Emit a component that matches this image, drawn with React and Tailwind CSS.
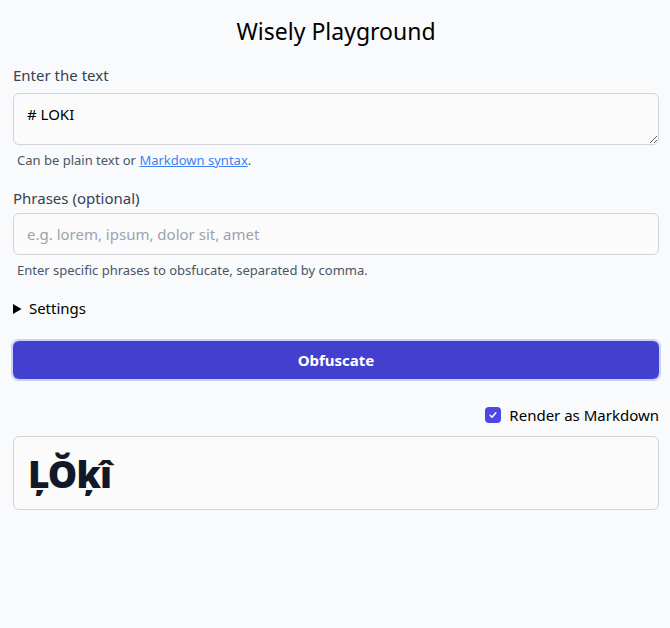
import React, { useState } from 'react';

export default function App() {
    const [text, setText] = useState('# LOKI');
    const [markdown, setMarkdown] = useState(true);

    return (
        <div className="min-h-[628px] bg-[#f9fafb] text-[#1f2937]" style={{ fontFamily: '"Noto Sans", sans-serif' }}>
            <div className="w-[646px] ml-[13px] pt-[14px]">
                {/* Title */}
                <h1 className="text-center text-[23px] leading-[34px] text-black">Wisely Playground</h1>

                {/* Text */}
                <label className="block mt-[17px] text-[15px] leading-[20px] text-[#374151]">Enter the text</label>
                <textarea
                    value={text}
                    onChange={(e) => setText(e.target.value)}
                    className="block mt-[8px] w-full h-[52px] rounded-md border border-[#d1d5db] bg-[#fbfbfc] px-[13px] py-[10px] text-[15px] leading-[20px] text-black outline-none"
                />
                <p className="mt-[6px] ml-[4px] text-[13px] leading-[18px] text-[#4b5563]">
                    Can be plain text or <a href="#" className="text-[#3b82f6] underline">Markdown syntax</a>.
                </p>

                {/* Phrases */}
                <label className="block mt-[19px] text-[15px] leading-[20px] text-[#374151]">Phrases (optional)</label>
                <input
                    placeholder="e.g. lorem, ipsum, dolor sit, amet"
                    className="block mt-[5px] w-full h-[42px] rounded-md border border-[#d1d5db] bg-[#fbfbfc] px-[13px] text-[15px] text-black placeholder:text-[#9ca3af] outline-none"
                />
                <p className="mt-[6px] ml-[4px] text-[13px] leading-[18px] text-[#4b5563]">
                    Enter specific phrases to obsfucate, separated by comma.
                </p>

                {/* Settings */}
                <details className="mt-[19px]">
                    <summary className="text-[15px] leading-[20px] text-black cursor-pointer">Settings</summary>
                </details>

                {/* Button */}
                <button className="block mt-[23px] w-full h-[38px] rounded-md bg-[#4340cf] ring-2 ring-[#c7d2fe] text-white text-[15px] font-bold">
                    Obfuscate
                </button>

                {/* Render toggle */}
                <div className="mt-[26px] flex justify-end items-center gap-[8px]">
                    <button
                        onClick={() => setMarkdown(!markdown)}
                        className={markdown
                            ? "w-[16px] h-[16px] rounded-[4px] bg-[#4f46e5] flex items-center justify-center"
                            : "w-[16px] h-[16px] rounded-[4px] border border-[#9ca3af] bg-white"}
                    >
                        {markdown && (
                            <svg width="10" height="10" viewBox="0 0 16 16" fill="none" stroke="white" strokeWidth="2.5" strokeLinecap="round" strokeLinejoin="round"><path d="M3.5 8.5l3 3 6-7" /></svg>
                        )}
                    </button>
                    <span className="text-[15px] leading-[20px] text-black">Render as Markdown</span>
                </div>

                {/* Output */}
                <div className="mt-[11px] h-[74px] rounded-md border border-[#d1d5db] bg-[#fbfbfc] px-[14px] flex items-center">
                    <span className="text-[37px] font-black leading-none text-[#111827] tracking-tight">ĻŎķî</span>
                </div>
            </div>
        </div>
    );
}
